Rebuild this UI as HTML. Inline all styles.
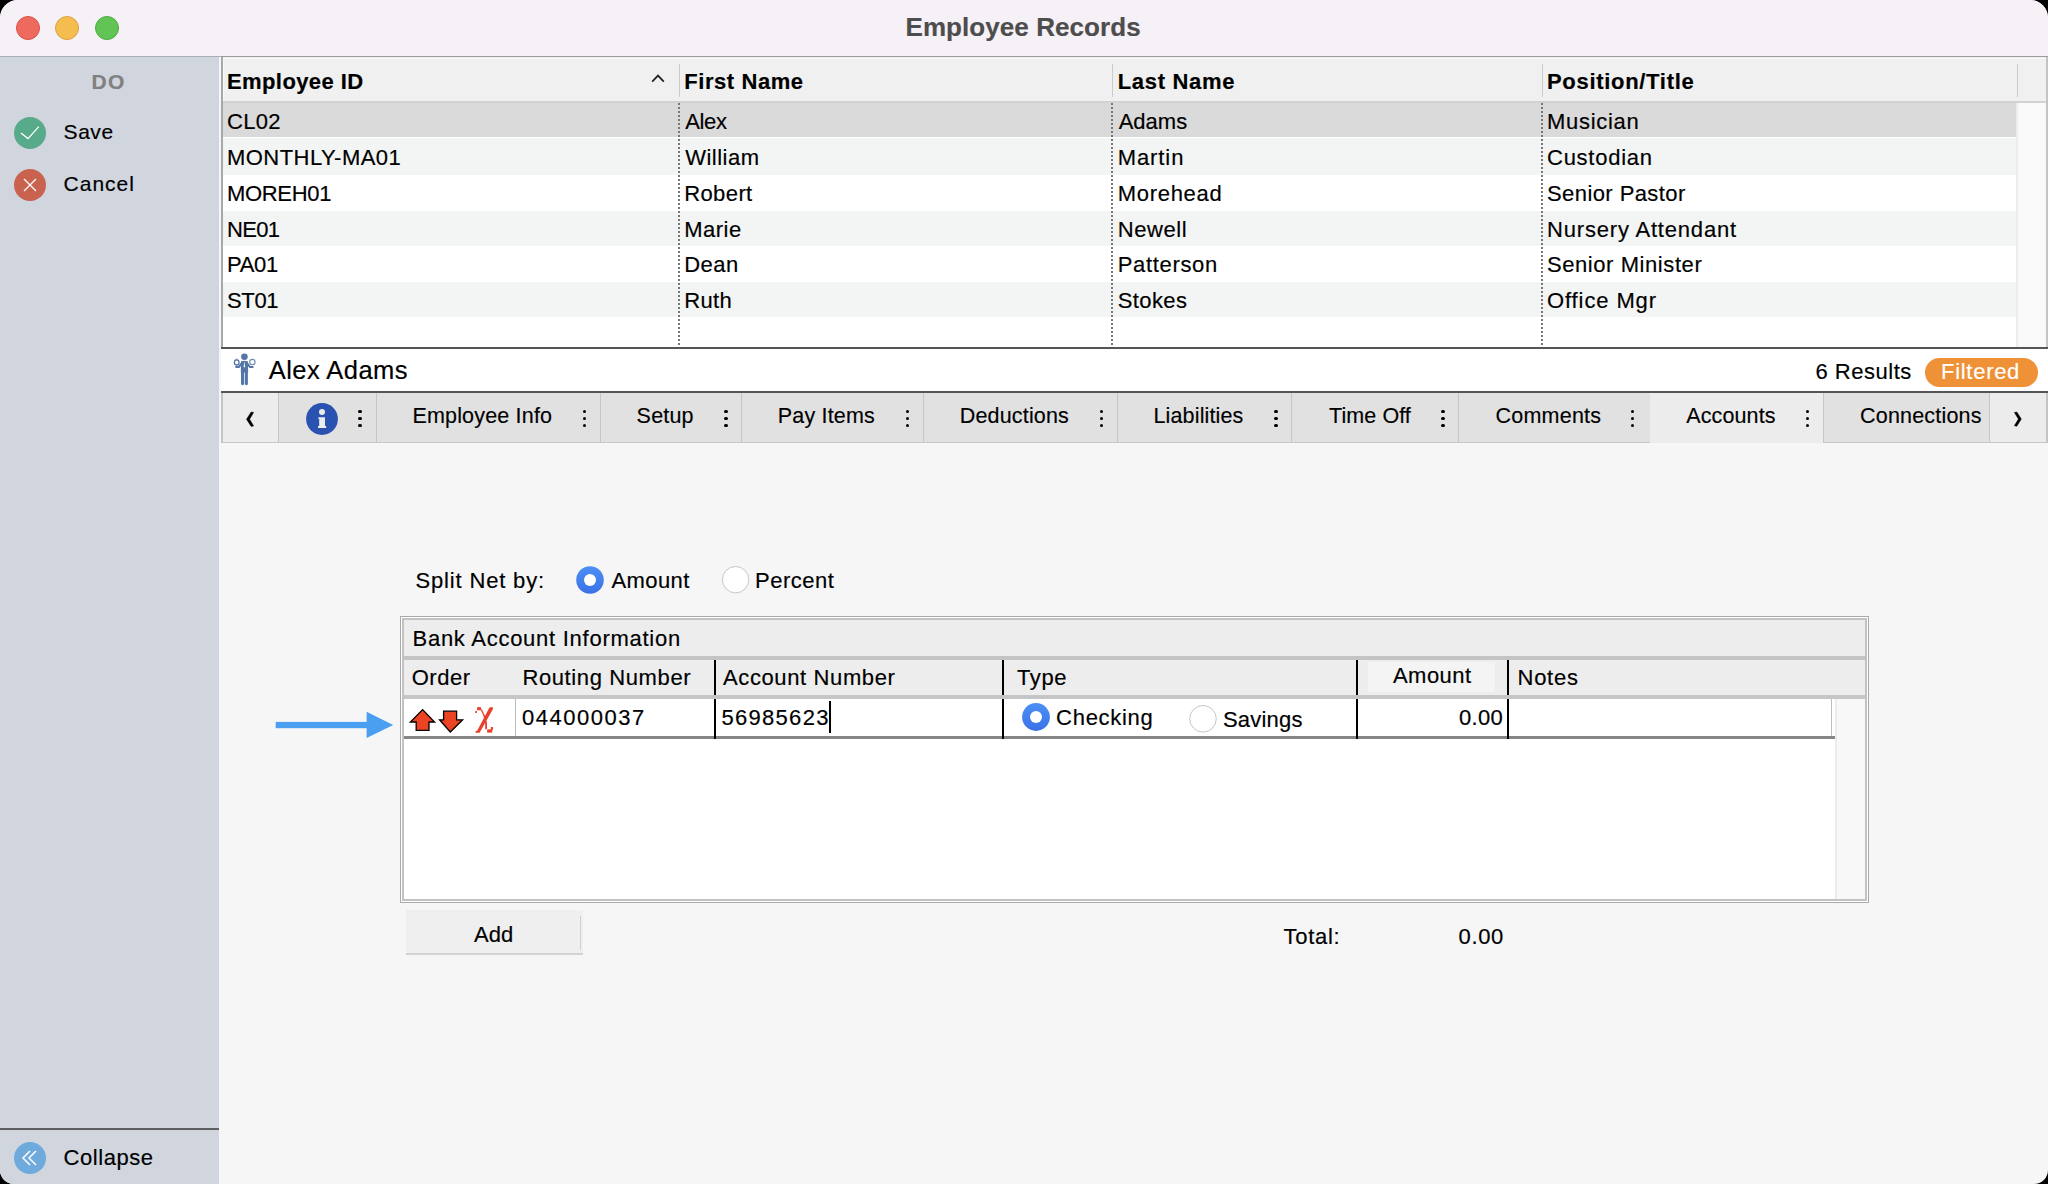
<!DOCTYPE html>
<html><head><meta charset="utf-8"><style>
html,body{margin:0;padding:0;width:2048px;height:1184px;overflow:hidden;background:#000;}
#win{position:absolute;left:0;top:0;width:2048px;height:1184px;background:#f6f6f6;border-radius:18px 18px 14px 14px;overflow:hidden;font-family:"Liberation Sans", sans-serif;}
#win div,#win span,#win svg{position:absolute;}
.t{white-space:pre;line-height:1;}
</style></head><body><div id="win">
<div style="left:0px;top:0px;width:2048px;height:56px;background:#f6f1f6;"></div>
<div style="left:0px;top:55.8px;width:221px;height:1.4px;background:#a9b0ba;"></div>
<div style="left:221px;top:55.8px;width:1827px;height:1.8px;background:#9c9c9c;"></div>
<div style="left:16px;top:16px;width:24px;height:24px;background:#ee6a5f;border-radius:50%;box-sizing:border-box;border:1px solid #d65248;"></div>
<div style="left:55px;top:16px;width:24px;height:24px;background:#f5bd4f;border-radius:50%;box-sizing:border-box;border:1px solid #d9a13c;"></div>
<div style="left:95px;top:16px;width:24px;height:24px;background:#61c454;border-radius:50%;box-sizing:border-box;border:1px solid #4fa940;"></div>
<span id="t0" class="t" style="top:13.59px;font-size:26px;font-weight:700;color:#4d4d4d;-webkit-text-stroke:0.18px #4d4d4d;letter-spacing:0.067px;left:905.50px;">Employee Records</span>
<div style="left:0px;top:57px;width:219px;height:1127px;background:#d0d5de;"></div>
<span id="t1" class="t" style="top:71.42px;font-size:21px;font-weight:700;color:#808080;-webkit-text-stroke:0.18px #808080;letter-spacing:1.400px;left:91.50px;">DO</span>
<div style="left:14px;top:117px;width:32px;height:32px;background:#58ab8a;border-radius:50%;"></div>
<svg style="left:14px;top:117px" width="32" height="32" viewBox="0 0 32 32"><path d="M7 16 L14 21.6 L24.8 9.6" fill="none" stroke="#fff" stroke-width="1.25"/></svg>
<span id="t2" class="t" style="top:120.82px;font-size:21px;color:#000;-webkit-text-stroke:0.18px #000;letter-spacing:0.533px;left:63.60px;">Save</span>
<div style="left:14px;top:169px;width:32px;height:32px;background:#c96350;border-radius:50%;"></div>
<svg style="left:14px;top:169px" width="32" height="32" viewBox="0 0 32 32"><path d="M10 10 L22 22 M22 10 L10 22" fill="none" stroke="#fff" stroke-width="1.25"/></svg>
<span id="t3" class="t" style="top:172.72px;font-size:21px;color:#000;-webkit-text-stroke:0.18px #000;letter-spacing:1.000px;left:63.60px;">Cancel</span>
<div style="left:0px;top:1128px;width:219px;height:2px;background:#5c5e62;"></div>
<div style="left:14px;top:1142px;width:32px;height:32px;background:#6eaadc;border-radius:50%;"></div>
<svg style="left:14px;top:1142px" width="32" height="32" viewBox="0 0 32 32"><path d="M16 9 L9 16 L16 23 M22 9 L15 16 L22 23" fill="none" stroke="#fff" stroke-width="1.5"/></svg>
<span id="t4" class="t" style="top:1147.38px;font-size:22px;color:#000;-webkit-text-stroke:0.18px #000;letter-spacing:0.571px;left:63.50px;">Collapse</span>
<div style="left:219px;top:57px;width:2px;height:292px;background:#f6f6f6;"></div>
<div style="left:221px;top:57px;width:2px;height:292px;background:#a8a8a8;"></div>
<div style="left:2046px;top:57px;width:2px;height:292px;background:#c4c4c4;"></div>
<div style="left:223px;top:57px;width:1823px;height:44px;background:#f0f0f0;"></div>
<div style="left:223px;top:101px;width:1823px;height:2px;background:#d2d2d2;"></div>
<div style="left:223px;top:57.6px;width:1823px;height:1px;background:#f8f8f8;"></div>
<div style="left:223px;top:57.6px;width:1px;height:43px;background:#f8f8f8;"></div>
<div style="left:678.5px;top:64px;width:1.5px;height:33px;background:#cbcbcb;"></div>
<div style="left:1111.5px;top:64px;width:1.5px;height:33px;background:#cbcbcb;"></div>
<div style="left:1541.5px;top:64px;width:1.5px;height:33px;background:#cbcbcb;"></div>
<div style="left:2016.5px;top:64px;width:1.5px;height:33px;background:#cbcbcb;"></div>
<span id="t5" class="t" style="top:71.38px;font-size:22px;font-weight:700;color:#000;-webkit-text-stroke:0.18px #000;letter-spacing:0.400px;left:227.00px;">Employee ID</span>
<span id="t6" class="t" style="top:71.38px;font-size:22px;font-weight:700;color:#000;-webkit-text-stroke:0.18px #000;letter-spacing:0.578px;left:684.20px;">First Name</span>
<span id="t7" class="t" style="top:71.38px;font-size:22px;font-weight:700;color:#000;-webkit-text-stroke:0.18px #000;letter-spacing:0.700px;left:1117.70px;">Last Name</span>
<span id="t8" class="t" style="top:71.38px;font-size:22px;font-weight:700;color:#000;-webkit-text-stroke:0.18px #000;letter-spacing:0.692px;left:1547.00px;">Position/Title</span>
<svg style="left:650px;top:73px" width="16" height="10" viewBox="0 0 16 10"><path d="M2.2 8.6 L8 2.6 L13.8 8.6" fill="none" stroke="#222" stroke-width="1.8"/></svg>
<div style="left:223px;top:103px;width:1793px;height:244px;background:#ffffff;"></div>
<div style="left:223px;top:103px;width:1793px;height:33.8px;background:#dadada;"></div>
<span id="t9" class="t" style="top:111.48px;font-size:22px;color:#000;-webkit-text-stroke:0.18px #000;letter-spacing:0.333px;left:227.00px;">CL02</span>
<span id="t10" class="t" style="top:111.48px;font-size:22px;color:#000;-webkit-text-stroke:0.18px #000;letter-spacing:-0.333px;left:685.20px;">Alex</span>
<span id="t11" class="t" style="top:111.48px;font-size:22px;color:#000;-webkit-text-stroke:0.18px #000;letter-spacing:0.000px;left:1118.70px;">Adams</span>
<span id="t12" class="t" style="top:111.48px;font-size:22px;color:#000;-webkit-text-stroke:0.18px #000;letter-spacing:0.714px;left:1547.00px;">Musician</span>
<div style="left:223px;top:138.1px;width:1793px;height:36.7px;background:#f3f4f4;"></div>
<span id="t13" class="t" style="top:147.23px;font-size:22px;color:#000;-webkit-text-stroke:0.18px #000;letter-spacing:0.455px;left:227.00px;">MONTHLY-MA01</span>
<span id="t14" class="t" style="top:147.23px;font-size:22px;color:#000;-webkit-text-stroke:0.18px #000;letter-spacing:0.500px;left:685.20px;">William</span>
<span id="t15" class="t" style="top:147.23px;font-size:22px;color:#000;-webkit-text-stroke:0.18px #000;letter-spacing:0.920px;left:1117.70px;">Martin</span>
<span id="t16" class="t" style="top:147.23px;font-size:22px;color:#000;-webkit-text-stroke:0.18px #000;letter-spacing:0.750px;left:1547.00px;">Custodian</span>
<div style="left:223px;top:174.8px;width:1793px;height:35.9px;background:#ffffff;"></div>
<span id="t17" class="t" style="top:182.98px;font-size:22px;color:#000;-webkit-text-stroke:0.18px #000;letter-spacing:-0.333px;left:227.00px;">MOREH01</span>
<span id="t18" class="t" style="top:182.98px;font-size:22px;color:#000;-webkit-text-stroke:0.18px #000;letter-spacing:0.400px;left:684.20px;">Robert</span>
<span id="t19" class="t" style="top:182.98px;font-size:22px;color:#000;-webkit-text-stroke:0.18px #000;letter-spacing:0.714px;left:1117.70px;">Morehead</span>
<span id="t20" class="t" style="top:182.98px;font-size:22px;color:#000;-webkit-text-stroke:0.18px #000;letter-spacing:0.417px;left:1547.00px;">Senior Pastor</span>
<div style="left:223px;top:210.7px;width:1793px;height:35.5px;background:#f3f4f4;"></div>
<span id="t21" class="t" style="top:218.73px;font-size:22px;color:#000;-webkit-text-stroke:0.18px #000;letter-spacing:-0.667px;left:227.00px;">NE01</span>
<span id="t22" class="t" style="top:218.73px;font-size:22px;color:#000;-webkit-text-stroke:0.18px #000;letter-spacing:0.500px;left:684.20px;">Marie</span>
<span id="t23" class="t" style="top:218.73px;font-size:22px;color:#000;-webkit-text-stroke:0.18px #000;letter-spacing:0.600px;left:1117.70px;">Newell</span>
<span id="t24" class="t" style="top:218.73px;font-size:22px;color:#000;-webkit-text-stroke:0.18px #000;letter-spacing:0.812px;left:1547.00px;">Nursery Attendant</span>
<div style="left:223px;top:246.2px;width:1793px;height:35.5px;background:#ffffff;"></div>
<span id="t25" class="t" style="top:254.48px;font-size:22px;color:#000;-webkit-text-stroke:0.18px #000;letter-spacing:-0.333px;left:227.00px;">PA01</span>
<span id="t26" class="t" style="top:254.48px;font-size:22px;color:#000;-webkit-text-stroke:0.18px #000;letter-spacing:0.467px;left:684.20px;">Dean</span>
<span id="t27" class="t" style="top:254.48px;font-size:22px;color:#000;-webkit-text-stroke:0.18px #000;letter-spacing:0.675px;left:1117.70px;">Patterson</span>
<span id="t28" class="t" style="top:254.48px;font-size:22px;color:#000;-webkit-text-stroke:0.18px #000;letter-spacing:0.571px;left:1547.00px;">Senior Minister</span>
<div style="left:223px;top:281.7px;width:1793px;height:35.8px;background:#f3f4f4;"></div>
<span id="t29" class="t" style="top:290.23px;font-size:22px;color:#000;-webkit-text-stroke:0.18px #000;letter-spacing:-0.333px;left:227.00px;">ST01</span>
<span id="t30" class="t" style="top:290.23px;font-size:22px;color:#000;-webkit-text-stroke:0.18px #000;letter-spacing:0.333px;left:684.20px;">Ruth</span>
<span id="t31" class="t" style="top:290.23px;font-size:22px;color:#000;-webkit-text-stroke:0.18px #000;letter-spacing:0.400px;left:1117.70px;">Stokes</span>
<span id="t32" class="t" style="top:290.23px;font-size:22px;color:#000;-webkit-text-stroke:0.18px #000;letter-spacing:0.889px;left:1547.00px;">Office Mgr</span>
<div style="left:2016px;top:103px;width:2px;height:244px;background:#ececec;"></div>
<div style="left:2018px;top:103px;width:28px;height:244px;background:#f9f9f9;"></div>
<div style="left:678.3px;top:103px;width:1.3px;height:244px;background:transparent;background-image:repeating-linear-gradient(to bottom,#777 0,#777 2px,transparent 2px,transparent 4px);"></div>
<div style="left:1111.3px;top:103px;width:1.3px;height:244px;background:transparent;background-image:repeating-linear-gradient(to bottom,#777 0,#777 2px,transparent 2px,transparent 4px);"></div>
<div style="left:1541.3px;top:103px;width:1.3px;height:244px;background:transparent;background-image:repeating-linear-gradient(to bottom,#777 0,#777 2px,transparent 2px,transparent 4px);"></div>
<div style="left:221px;top:347px;width:1827px;height:2px;background:#555555;"></div>
<div style="left:221px;top:349px;width:1827px;height:42px;background:#ffffff;"></div>
<svg style="left:228px;top:350px" width="34" height="40" viewBox="228 350 34 40">
<g fill="#5577a8" stroke="none">
<circle cx="244.4" cy="356.8" r="3.3"/>
<path d="M241 361.2 Q244.4 360.2 247.8 361.2 L248.2 372.5 L240.8 372.5 Z"/>
<path d="M241.6 361.4 L238.4 366 L235.6 366 Q234.6 367 235.6 368 L239.4 368 L242 364.6 Z"/>
<path d="M247.2 361.4 L250.4 366 L253.2 366 Q254.2 367 253.2 368 L249.4 368 L246.8 364.6 Z"/>
<rect x="241" y="371" width="3.1" height="14.2" rx="1.4"/>
<rect x="244.8" y="371" width="3.1" height="14.2" rx="1.4"/>
</g>
<path d="M244.4 361.2 L243.7 366.5 L244.4 367.8 L245.1 366.5 Z" fill="#fff"/>
<ellipse cx="236.7" cy="362.4" rx="2.3" ry="2.6" fill="none" stroke="#5577a8" stroke-width="1.3"/>
<path d="M235.5 359.2 L237.9 359.2" stroke="#5577a8" stroke-width="1" opacity="0.6"/>
<circle cx="252.4" cy="362.1" r="2.7" fill="none" stroke="#5577a8" stroke-width="1.1" opacity="0.85"/>
</svg>
<span id="t33" class="t" style="top:358.41px;font-size:25.5px;color:#000;-webkit-text-stroke:0.18px #000;letter-spacing:0.444px;left:268.80px;">Alex Adams</span>
<span id="t34" class="t" style="top:360.68px;font-size:22px;color:#000;-webkit-text-stroke:0.18px #000;letter-spacing:0.525px;left:1815.40px;">6 Results</span>
<div style="left:1925px;top:358px;width:113px;height:29px;background:#ef9136;border-radius:14.5px;"></div>
<span id="t35" class="t" style="top:360.68px;font-size:22px;color:#ffffff;-webkit-text-stroke:0.18px #ffffff;letter-spacing:0.714px;left:1941.00px;">Filtered</span>
<div style="left:221px;top:391px;width:1827px;height:2px;background:#555555;"></div>
<div style="left:221px;top:393px;width:2px;height:50px;background:#c4c4c4;"></div>
<div style="left:2046px;top:393px;width:2px;height:50px;background:#c4c4c4;"></div>
<div style="left:223px;top:393px;width:1823px;height:48.5px;background:#e1e1e1;"></div>
<div style="left:223px;top:441.5px;width:1823px;height:1.5px;background:#c8c8c8;"></div>
<div style="left:223px;top:393px;width:55px;height:48.5px;background:#ececec;"></div>
<div style="left:1990px;top:393px;width:56px;height:48.5px;background:#ececec;"></div>
<div style="left:1649.5px;top:393px;width:173.5px;height:50px;background:#ececec;"></div>
<div style="left:278px;top:393px;width:1.2px;height:48.5px;background:#c6c6c6;"></div>
<div style="left:376px;top:393px;width:1.2px;height:48.5px;background:#c6c6c6;"></div>
<div style="left:600px;top:393px;width:1.2px;height:48.5px;background:#c6c6c6;"></div>
<div style="left:741px;top:393px;width:1.2px;height:48.5px;background:#c6c6c6;"></div>
<div style="left:923px;top:393px;width:1.2px;height:48.5px;background:#c6c6c6;"></div>
<div style="left:1117px;top:393px;width:1.2px;height:48.5px;background:#c6c6c6;"></div>
<div style="left:1291px;top:393px;width:1.2px;height:48.5px;background:#c6c6c6;"></div>
<div style="left:1458px;top:393px;width:1.2px;height:48.5px;background:#c6c6c6;"></div>
<div style="left:1823px;top:393px;width:1.2px;height:48.5px;background:#c6c6c6;"></div>
<div style="left:1989px;top:393px;width:1.2px;height:48.5px;background:#c6c6c6;"></div>
<svg style="left:236px;top:402px" width="30" height="32" viewBox="236 402 30 32"><path d="M253.6 412.5 L251.2 412 L246.5 419.3 L251.2 426.4 L253.6 425.9 L249.6 419.3 Z" fill="#000" stroke="#000" stroke-width="0.5" stroke-linejoin="round"/></svg>
<svg style="left:2004px;top:402px" width="30" height="32" viewBox="2004 402 30 32"><path d="M2014.4 412.5 L2016.8 412 L2021.3 419.1 L2016.8 426.2 L2014.4 425.7 L2018.4 419.1 Z" fill="#000" stroke="#000" stroke-width="0.5" stroke-linejoin="round"/></svg>
<svg style="left:306px;top:403px" width="32" height="32" viewBox="0 0 32 32">
<circle cx="16" cy="16" r="15.9" fill="#2a52b0"/>
<circle cx="16" cy="9" r="3" fill="#ececec"/>
<path d="M12.4 14.2 L19 14.2 L19 23 L20.2 23 L20.2 25 L12 25 L12 23 L13.2 23 L13.2 16 L12.4 16 Z" fill="#ececec"/>
</svg>
<div style="left:358.25px;top:409.75px;width:3.3px;height:3.3px;background:#000;border-radius:50%;"></div>
<div style="left:358.25px;top:416.85px;width:3.3px;height:3.3px;background:#000;border-radius:50%;"></div>
<div style="left:358.25px;top:423.95000000000005px;width:3.3px;height:3.3px;background:#000;border-radius:50%;"></div>
<div style="left:582.65px;top:409.75px;width:3.3px;height:3.3px;background:#000;border-radius:50%;"></div>
<div style="left:582.65px;top:416.85px;width:3.3px;height:3.3px;background:#000;border-radius:50%;"></div>
<div style="left:582.65px;top:423.95000000000005px;width:3.3px;height:3.3px;background:#000;border-radius:50%;"></div>
<div style="left:724.25px;top:409.75px;width:3.3px;height:3.3px;background:#000;border-radius:50%;"></div>
<div style="left:724.25px;top:416.85px;width:3.3px;height:3.3px;background:#000;border-radius:50%;"></div>
<div style="left:724.25px;top:423.95000000000005px;width:3.3px;height:3.3px;background:#000;border-radius:50%;"></div>
<div style="left:905.75px;top:409.75px;width:3.3px;height:3.3px;background:#000;border-radius:50%;"></div>
<div style="left:905.75px;top:416.85px;width:3.3px;height:3.3px;background:#000;border-radius:50%;"></div>
<div style="left:905.75px;top:423.95000000000005px;width:3.3px;height:3.3px;background:#000;border-radius:50%;"></div>
<div style="left:1099.6499999999999px;top:409.75px;width:3.3px;height:3.3px;background:#000;border-radius:50%;"></div>
<div style="left:1099.6499999999999px;top:416.85px;width:3.3px;height:3.3px;background:#000;border-radius:50%;"></div>
<div style="left:1099.6499999999999px;top:423.95000000000005px;width:3.3px;height:3.3px;background:#000;border-radius:50%;"></div>
<div style="left:1274.35px;top:409.75px;width:3.3px;height:3.3px;background:#000;border-radius:50%;"></div>
<div style="left:1274.35px;top:416.85px;width:3.3px;height:3.3px;background:#000;border-radius:50%;"></div>
<div style="left:1274.35px;top:423.95000000000005px;width:3.3px;height:3.3px;background:#000;border-radius:50%;"></div>
<div style="left:1441.35px;top:409.75px;width:3.3px;height:3.3px;background:#000;border-radius:50%;"></div>
<div style="left:1441.35px;top:416.85px;width:3.3px;height:3.3px;background:#000;border-radius:50%;"></div>
<div style="left:1441.35px;top:423.95000000000005px;width:3.3px;height:3.3px;background:#000;border-radius:50%;"></div>
<div style="left:1630.9499999999998px;top:409.75px;width:3.3px;height:3.3px;background:#000;border-radius:50%;"></div>
<div style="left:1630.9499999999998px;top:416.85px;width:3.3px;height:3.3px;background:#000;border-radius:50%;"></div>
<div style="left:1630.9499999999998px;top:423.95000000000005px;width:3.3px;height:3.3px;background:#000;border-radius:50%;"></div>
<div style="left:1805.75px;top:409.75px;width:3.3px;height:3.3px;background:#000;border-radius:50%;"></div>
<div style="left:1805.75px;top:416.85px;width:3.3px;height:3.3px;background:#000;border-radius:50%;"></div>
<div style="left:1805.75px;top:423.95000000000005px;width:3.3px;height:3.3px;background:#000;border-radius:50%;"></div>
<span id="t36" class="t" style="top:406.10px;font-size:21.5px;color:#000;-webkit-text-stroke:0.15px #000;letter-spacing:0.183px;left:412.40px;">Employee Info</span>
<span id="t37" class="t" style="top:406.10px;font-size:21.5px;color:#000;-webkit-text-stroke:0.15px #000;letter-spacing:0.200px;left:636.60px;">Setup</span>
<span id="t38" class="t" style="top:406.10px;font-size:21.5px;color:#000;-webkit-text-stroke:0.15px #000;letter-spacing:0.200px;left:777.70px;">Pay Items</span>
<span id="t39" class="t" style="top:406.10px;font-size:21.5px;color:#000;-webkit-text-stroke:0.15px #000;letter-spacing:0.178px;left:959.70px;">Deductions</span>
<span id="t40" class="t" style="top:406.10px;font-size:21.5px;color:#000;-webkit-text-stroke:0.15px #000;letter-spacing:0.140px;left:1153.50px;">Liabilities</span>
<span id="t41" class="t" style="top:406.10px;font-size:21.5px;color:#000;-webkit-text-stroke:0.15px #000;letter-spacing:0.086px;left:1329.00px;">Time Off</span>
<span id="t42" class="t" style="top:406.10px;font-size:21.5px;color:#000;-webkit-text-stroke:0.15px #000;letter-spacing:0.229px;left:1495.50px;">Comments</span>
<span id="t43" class="t" style="top:406.10px;font-size:21.5px;color:#000;-webkit-text-stroke:0.15px #000;letter-spacing:0.114px;left:1686.30px;">Accounts</span>
<span id="t44" class="t" style="top:406.10px;font-size:21.5px;color:#000;-webkit-text-stroke:0.15px #000;letter-spacing:0.200px;left:1860.00px;">Connections</span>
<span id="t45" class="t" style="top:569.88px;font-size:22px;color:#000;-webkit-text-stroke:0.18px #000;letter-spacing:0.833px;left:415.50px;">Split Net by:</span>
<svg style="left:575px;top:565px" width="30" height="30" viewBox="0 0 30 30">
<defs><linearGradient id="rg1" x1="0" y1="0" x2="0" y2="1"><stop offset="0" stop-color="#4c8ff5"/><stop offset="1" stop-color="#3a72e6"/></linearGradient></defs>
<circle cx="15" cy="15" r="13.8" fill="url(#rg1)"/>
<circle cx="15" cy="15" r="6" fill="#fff"/>
</svg>
<span id="t46" class="t" style="top:569.88px;font-size:22px;color:#000;-webkit-text-stroke:0.18px #000;letter-spacing:0.400px;left:611.50px;">Amount</span>
<svg style="left:721px;top:565px" width="30" height="30" viewBox="0 0 30 30">
<circle cx="14.6" cy="14.7" r="13.2" fill="#fff" stroke="#c6c6c6" stroke-width="1"/>
</svg>
<span id="t47" class="t" style="top:569.88px;font-size:22px;color:#000;-webkit-text-stroke:0.18px #000;letter-spacing:0.500px;left:755.00px;">Percent</span>
<div style="left:400px;top:616px;width:1469px;height:287px;background:#ffffff;box-sizing:border-box;border:1px solid #a9a9a9;"></div>
<div style="left:402px;top:618px;width:1465px;height:283px;background:#ffffff;box-sizing:border-box;border:2px solid #c2c2c2;"></div>
<div style="left:404px;top:620px;width:1461px;height:36px;background:#ededed;"></div>
<div style="left:404px;top:656px;width:1461px;height:4px;background:#c4c4c4;"></div>
<span id="t48" class="t" style="top:627.58px;font-size:22px;color:#000;-webkit-text-stroke:0.18px #000;letter-spacing:0.739px;left:412.50px;">Bank Account Information</span>
<div style="left:404px;top:660px;width:1461px;height:35.4px;background:#ededed;"></div>
<div style="left:1368px;top:661.7px;width:127px;height:30.8px;background:#f4f4f4;"></div>
<div style="left:404px;top:695.4px;width:1461px;height:3.6px;background:#c6c6c6;"></div>
<span id="t49" class="t" style="top:666.78px;font-size:22px;color:#000;-webkit-text-stroke:0.18px #000;letter-spacing:0.550px;left:411.70px;">Order</span>
<span id="t50" class="t" style="top:666.78px;font-size:22px;color:#000;-webkit-text-stroke:0.18px #000;letter-spacing:0.615px;left:522.40px;">Routing Number</span>
<span id="t51" class="t" style="top:666.78px;font-size:22px;color:#000;-webkit-text-stroke:0.18px #000;letter-spacing:0.615px;left:723.00px;">Account Number</span>
<span id="t52" class="t" style="top:667.18px;font-size:22px;color:#000;-webkit-text-stroke:0.18px #000;letter-spacing:0.533px;left:1017.10px;">Type</span>
<span id="t53" class="t" style="top:664.58px;font-size:22px;color:#000;-webkit-text-stroke:0.18px #000;letter-spacing:0.440px;left:1393.00px;">Amount</span>
<span id="t54" class="t" style="top:666.78px;font-size:22px;color:#000;-webkit-text-stroke:0.18px #000;letter-spacing:0.750px;left:1517.50px;">Notes</span>
<div style="left:404px;top:699px;width:1431px;height:37.4px;background:#ffffff;"></div>
<div style="left:404px;top:736.4px;width:1431px;height:2.5px;background:#868686;"></div>
<div style="left:515px;top:699px;width:1px;height:37.4px;background:#bdbdbd;"></div>
<div style="left:1830.5px;top:699px;width:1.2px;height:37.4px;background:#bdbdbd;"></div>
<div style="left:714px;top:660px;width:2px;height:35.2px;background:#000;"></div>
<div style="left:714px;top:699.2px;width:2px;height:39.7px;background:#000;"></div>
<div style="left:1002px;top:660px;width:2px;height:35.2px;background:#000;"></div>
<div style="left:1002px;top:699.2px;width:2px;height:39.7px;background:#000;"></div>
<div style="left:1356.2px;top:660px;width:2px;height:35.2px;background:#000;"></div>
<div style="left:1356.2px;top:699.2px;width:2px;height:39.7px;background:#000;"></div>
<div style="left:1507px;top:660px;width:2px;height:35.2px;background:#000;"></div>
<div style="left:1507px;top:699.2px;width:2px;height:39.7px;background:#000;"></div>
<div style="left:1835px;top:699px;width:2px;height:200px;background:#ececec;"></div>
<div style="left:1837px;top:699px;width:28px;height:200px;background:#f8f8f8;"></div>
<svg style="left:405px;top:702px" width="95" height="38" viewBox="405 702 95 38">
<path d="M422.6 709.6 L434.6 722 L429 722 L429 730.4 L416.2 730.4 L416.2 722 L410.4 722 Z" fill="#ec4324" stroke="#000" stroke-width="1.3"/>
<path d="M443.6 711.2 L456.6 711.2 L456.6 719.8 L462.6 719.8 L450.3 732 L439.6 719.8 L443.6 719.8 Z" fill="#ec4324" stroke="#000" stroke-width="1.3"/>
<g fill="#e8402a">
<path d="M489.6 707.2 L492.9 707.2 L492.9 709.2 L479.6 732.8 L475.6 732.8 L475.6 731 L477 731 Z"/>
<rect x="477.1" y="707.2" width="4" height="3.1"/>
<rect x="475.3" y="711" width="1.7" height="2"/>
<path d="M480.6 709.6 L482 709.6 L485 716 L483.5 716 Z"/>
<rect x="485.2" y="722.6" width="1.8" height="6.6"/>
<path d="M483.4 716 L485 716 L487 723 L485.4 723 Z"/>
<rect x="487.1" y="729.4" width="5.1" height="3.2"/>
<rect x="490.8" y="727" width="2.1" height="3"/>
</g>
</svg>
<span id="t55" class="t" style="top:706.58px;font-size:22px;color:#000;-webkit-text-stroke:0.18px #000;letter-spacing:1.500px;left:522.00px;">044000037</span>
<span id="t56" class="t" style="top:706.58px;font-size:22px;color:#000;-webkit-text-stroke:0.18px #000;letter-spacing:1.286px;left:721.50px;">56985623</span>
<div style="left:829px;top:701px;width:2px;height:31.5px;background:#000;"></div>
<svg style="left:1021px;top:702px" width="30" height="30" viewBox="0 0 30 30">
<circle cx="15" cy="15" r="13.9" fill="url(#rg1)"/>
<circle cx="15" cy="15" r="6" fill="#fff"/>
</svg>
<span id="t57" class="t" style="top:706.58px;font-size:22px;color:#000;-webkit-text-stroke:0.18px #000;letter-spacing:0.714px;left:1056.10px;">Checking</span>
<svg style="left:1188px;top:704px" width="30" height="30" viewBox="0 0 30 30">
<circle cx="15" cy="14.8" r="13.3" fill="#fff" stroke="#c6c6c6" stroke-width="1"/>
</svg>
<span id="t58" class="t" style="top:708.58px;font-size:22px;color:#000;-webkit-text-stroke:0.18px #000;letter-spacing:0.200px;left:1223.00px;">Savings</span>
<span id="t59" class="t" style="top:706.58px;font-size:22px;color:#000;-webkit-text-stroke:0.18px #000;letter-spacing:0.333px;left:1458.90px;">0.00</span>
<div style="left:406px;top:910px;width:177px;height:45px;background:#efefef;"></div>
<div style="left:406px;top:953.3px;width:177px;height:1.8px;background:#d3d3d3;"></div>
<div style="left:579.5px;top:916px;width:1.2px;height:33.5px;background:#d0d0d0;"></div>
<span id="t60" class="t" style="top:923.88px;font-size:22px;color:#000;-webkit-text-stroke:0.18px #000;letter-spacing:0.100px;left:474.00px;">Add</span>
<span id="t61" class="t" style="top:925.78px;font-size:22px;color:#000;-webkit-text-stroke:0.18px #000;letter-spacing:0.720px;left:1283.50px;">Total:</span>
<span id="t62" class="t" style="top:925.78px;font-size:22px;color:#000;-webkit-text-stroke:0.18px #000;letter-spacing:0.667px;left:1458.50px;">0.00</span>
<svg style="left:270px;top:705px" width="130" height="40" viewBox="270 705 130 40">
<rect x="275.7" y="721.9" width="92" height="6.3" fill="#4a9ff0"/>
<path d="M366.6 711.7 L393.2 725 L366.6 737.9 Z" fill="#4a9ff0"/>
</svg>
</div></body></html>
